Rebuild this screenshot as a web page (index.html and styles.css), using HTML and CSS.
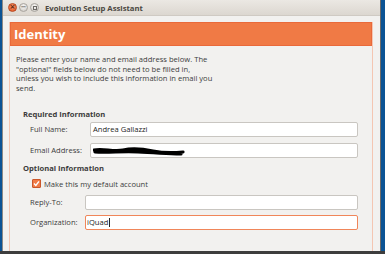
FILE: index.html
```html
<!DOCTYPE html>
<html lang="en">
<head>
  <meta charset="UTF-8" />
  <title>Evolution Setup Assistant</title>
  <link rel="stylesheet" href="styles.css">
</head>
<body>
  <div class="desktop">
    <div class="window">
      <div class="titlebar">
        <div class="win-buttons">
          <span class="wbtn close">×</span>
          <span class="wbtn">−</span>
          <span class="wbtn max"><i></i></span>
        </div>
        <div class="title">Evolution Setup Assistant</div>
      </div>

      <div class="content">
        <div class="page">
          <div class="page-head">Identity</div>
          <div class="page-body">
            <p class="intro">Please enter your name and email address below. The<br>
              "optional" fields below do not need to be filled in,<br>
              unless you wish to include this information in email you<br>
              send.</p>

            <h3>Required Information</h3>
            <div class="form-grid required">
              <label>Full Name:</label>
              <div class="field">Andrea Gallazzi</div>
              <label>Email Address:</label>
              <div class="field">
                <svg class="scribble" width="92" height="10" viewBox="0 0 92 10">
                  <path d="M1 4 C10 2 20 6 30 4 S50 3 60 5 S80 7 90 6 M2 6 C15 7 30 5 45 6 S70 7 88 8" stroke="#000" stroke-width="3.2" fill="none" stroke-linecap="round"/>
                </svg>
              </div>
            </div>

            <h3>Optional Information</h3>
            <div class="check-row">
              <span class="checkbox">
                <svg width="7" height="7" viewBox="0 0 7 7"><path d="M1 3.6 L2.8 5.4 L6 1.4" stroke="#fff" stroke-width="1.4" fill="none"/></svg>
              </span>
              <span>Make this my default account</span>
            </div>
            <div class="form-grid optional">
              <label>Reply-To:</label>
              <div class="field"></div>
              <label>Organization:</label>
              <div class="field focused">iQuad<span class="caret"></span></div>
            </div>
          </div>
        </div>
      </div>
    </div>
  </div>
</body>
</html>
```

FILE: styles.css
```css
:root {
  --orange: #f07a45;
  --orange-pale: #f4c6b2;
  --bg: #f2f1ef;
  --text: #3c3c3c;
  --desktop: #0b5394;
}

* {
  box-sizing: border-box;
  margin: 0;
  padding: 0;
}

body {
  background: #ffffff;
  font-family: "Open Sans", sans-serif;
  color: var(--text);
}

.desktop {
  width: 379px;
  height: 251px;
  box-sizing: content-box;
  background: var(--desktop);
  padding-left: 2px;
  padding-right: 4px;
  border-bottom: 3px solid #3d3d3d;
}

.window {
  height: 251px;
  background: var(--bg);
  border-left: 1px solid #8d8a86;
  border-right: 1px solid #6e6b68;
  display: flex;
  flex-direction: column;
  overflow: hidden;
}

.titlebar {
  height: 16px;
  flex: none;
  background: linear-gradient(#ebe8e3, #dcd7d0);
  border-bottom: 1px solid #cfcac3;
  display: flex;
  align-items: center;
}

.win-buttons {
  display: flex;
  gap: 2px;
  padding-left: 5px;
}

.wbtn {
  width: 9px;
  height: 9px;
  border-radius: 50%;
  background: radial-gradient(circle at 50% 35%, #fbfaf8, #c9c5bf);
  border: 1px solid #a9a59f;
  font-size: 7px;
  line-height: 7px;
  text-align: center;
  color: #6d6a66;
  font-family: "DejaVu Sans", sans-serif;
  font-weight: bold;
  display: flex;
  align-items: center;
  justify-content: center;
}

.wbtn.close {
  background: radial-gradient(circle at 50% 35%, #f89a6e, #e2511e);
  border-color: #b9471f;
  color: #5a2410;
}

.wbtn.max i {
  width: 4px;
  height: 4px;
  border: 1px solid #6d6a66;
}

.title {
  margin-left: 6px;
  font-weight: bold;
  font-size: 7.7px;
  color: #4b4842;
}

.content {
  flex: 1;
  padding: 6px 7px 0 6px;
  display: flex;
}

.page {
  flex: 1;
  border-left: 1px solid var(--orange-pale);
  border-right: 1px solid var(--orange-pale);
}

.page-head {
  height: 24px;
  background: var(--orange);
  border: 1px solid #e9693a;
  color: #ffffff;
  font-weight: bold;
  font-size: 13px;
  padding-left: 3px;
  display: flex;
  align-items: center;
}

.page-body {
  padding: 9px 14px 0 6px;
  font-size: 7.6px;
}

.intro {
  line-height: 9.7px;
  margin-bottom: 15px;
}

h3 {
  font-size: 7.6px;
  font-weight: bold;
  margin-left: 7px;
  line-height: 10px;
}

.form-grid {
  display: grid;
  align-items: center;
  margin-top: 3px;
}

.form-grid.required {
  grid-template-columns: 74px 1fr;
  row-gap: 6px;
  margin-bottom: 5px;
}

.form-grid.optional {
  grid-template-columns: 69px 1fr;
  row-gap: 5px;
  margin-top: 6px;
}

.form-grid label {
  padding-left: 14px;
}

.field {
  height: 15px;
  background: #ffffff;
  border: 1px solid #c9c6c1;
  border-radius: 2px;
  padding-left: 2px;
  display: flex;
  align-items: center;
  color: #1c1c1c;
}

.field.focused {
  border-color: #f0865a;
  padding-left: 1px;
}

.caret {
  width: 1px;
  height: 9px;
  background: #222;
  margin-left: 1px;
}

.scribble {
  margin-top: 1px;
}

.check-row {
  display: flex;
  align-items: center;
  gap: 3px;
  margin: 6px 0 0 16px;
}

.checkbox {
  width: 9px;
  height: 9px;
  background: var(--orange);
  border: 1px solid #c9562a;
  border-radius: 1px;
  display: flex;
  align-items: center;
  justify-content: center;
}
```
